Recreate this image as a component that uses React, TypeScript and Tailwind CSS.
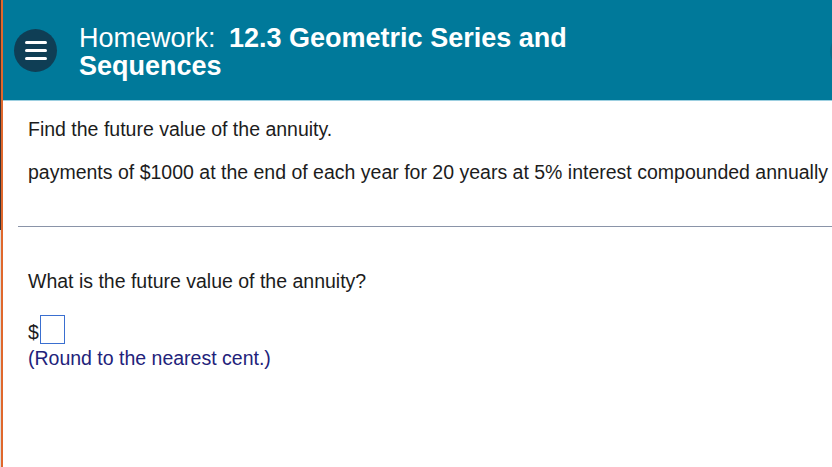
// Homework question view: teal title bar with menu button, annuity prompt and answer box

const FONT = "font-['Liberation_Sans',Arial,sans-serif]";

function MenuButton() {
  return (
    <button className="mt-[29px] ml-[11px] flex h-[43px] w-[43px] shrink-0 flex-col items-center justify-center gap-[5px] rounded-full bg-[#0f3e55]">
      <span className="block h-[3px] w-[22px] rounded-full bg-white" />
      <span className="block h-[3px] w-[22px] rounded-full bg-white" />
      <span className="block h-[3px] w-[22px] rounded-full bg-white" />
    </button>
  );
}

function Header() {
  return (
    <div className="relative flex h-[101px] items-start overflow-hidden border-b border-[#9ccfe0] bg-[#00799a]">
      <MenuButton />
      <h1 className="mt-[24px] ml-[22px] text-[27px] leading-[28px] text-white">
        Homework:<span className="ml-[6px] font-bold"> 12.3 Geometric Series and</span>
        <br />
        <span className="font-bold">Sequences</span>
      </h1>
      {/* next-question button peeking in from the right */}
      <div className="absolute top-[32px] left-[827px] h-[39px] w-[39px] rounded-full bg-[#076c8a]" />
    </div>
  );
}

export default function App() {
  return (
    <div className={`${FONT} flex h-[467px] w-[832px] overflow-hidden bg-white`}>
      {/* left window edge */}
      <div className="flex w-[1px] flex-col">
        <div className="h-[230px] bg-[#3a3434]" />
        <div className="flex-1 bg-[#dcdcdc]" />
      </div>
      <div className="w-[2px] bg-[#e0682c]" />

      <div className="flex min-w-0 flex-1 flex-col">
        <Header />

        <div className="pl-[15px]">
          <div className="pt-[16px] pl-[10px] text-[19.5px] leading-[24px] text-[#1c1c1c]">
            <p>Find the future value of the annuity.</p>
            <p className="mt-[19px] whitespace-nowrap">
              payments of $1000 at the end of each year for 20 years at 5% interest compounded annually
            </p>
          </div>

          <div className="mt-[42px] h-px bg-[#8a94a8]" />

          <div className="pt-[42px] pl-[10px] text-[19.5px] leading-[24px] text-[#1c1c1c]">
            <p>What is the future value of the annuity?</p>
            <div className="mt-[22px] flex items-end">
              <span>$</span>
              <div className="ml-px h-[29px] w-[25px] border border-[#3a6fd0] bg-white" />
            </div>
            <p className="mt-[2px] text-[#22227a]">(Round to the nearest cent.)</p>
          </div>
        </div>
      </div>
    </div>
  );
}
